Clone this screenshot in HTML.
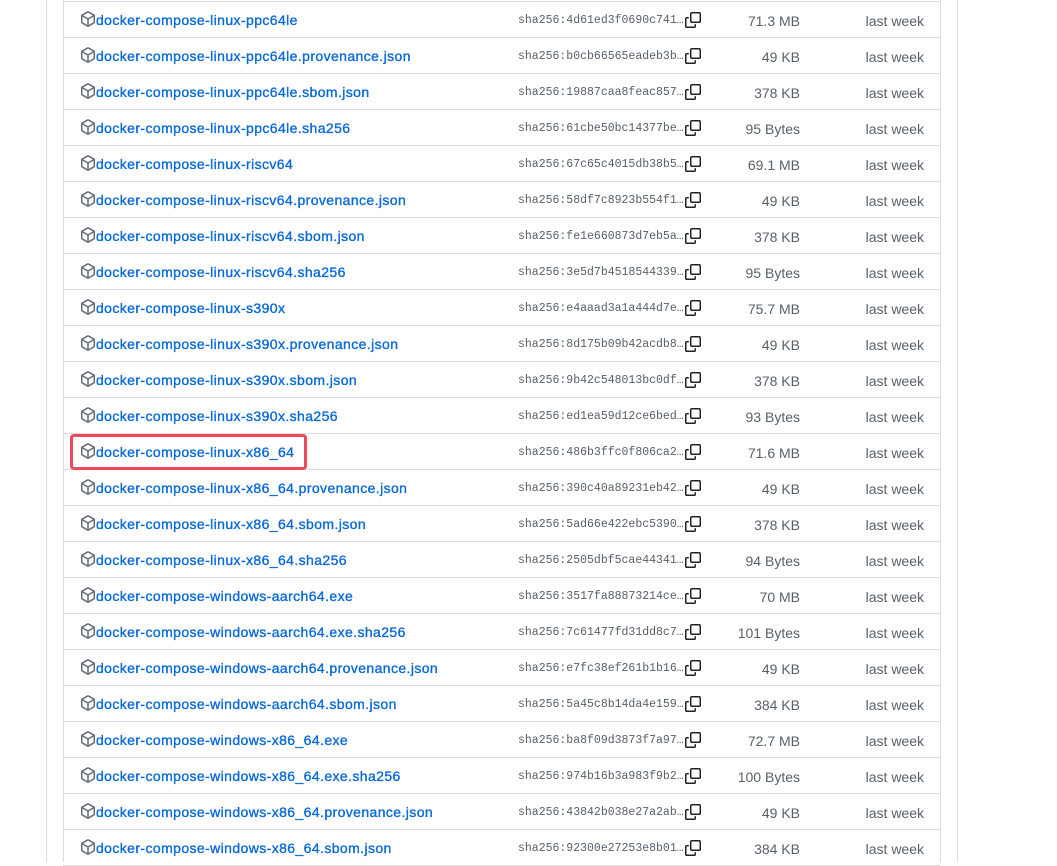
<!DOCTYPE html><html><head><meta charset="utf-8"><style>
body{margin:0;width:1057px;height:862px;overflow:hidden;background:#fff;font-family:"Liberation Sans",sans-serif;position:relative}
.vl{position:absolute;top:0;bottom:0;width:1px;background:#d8dee4}
.row{position:absolute;left:63px;width:877px;height:36px;border-bottom:1px solid #d8dee4}
.ic{position:absolute;left:17px;top:10px}
.nm{position:absolute;left:33px;top:11px;font-size:14px;letter-spacing:0.4px;color:#0969da;font-weight:normal;-webkit-text-stroke:0.35px #0969da;white-space:nowrap}
.h{position:absolute;left:455px;top:13px;font-family:"Liberation Mono",monospace;font-size:11.5px;color:#57606a;white-space:nowrap}
.cp{position:absolute;left:622px;top:11px}
.sz{position:absolute;right:140px;top:12px;font-size:14px;color:#57606a}
.dt{position:absolute;right:16px;top:12px;font-size:14px;color:#57606a}
.hl{position:absolute;left:70px;top:434px;width:231px;height:30px;border:3px solid #f0475a;border-radius:4px}
</style></head><body>
<div class="vl" style="left:46px"></div><div class="vl" style="left:957px"></div>
<div class="vl" style="left:63px"></div><div class="vl" style="left:940px"></div>
<div class="row" style="top:0;height:1px"></div>
<div id="rows"></div>
<div class="hl"></div>
<script>
var d=[
["docker-compose-linux-ppc64le","4d61ed3f0690c741","71.3 MB"],
["docker-compose-linux-ppc64le.provenance.json","b0cb66565eadeb3b","49 KB"],
["docker-compose-linux-ppc64le.sbom.json","19887caa8feac857","378 KB"],
["docker-compose-linux-ppc64le.sha256","61cbe50bc14377be","95 Bytes"],
["docker-compose-linux-riscv64","67c65c4015db38b5","69.1 MB"],
["docker-compose-linux-riscv64.provenance.json","58df7c8923b554f1","49 KB"],
["docker-compose-linux-riscv64.sbom.json","fe1e660873d7eb5a","378 KB"],
["docker-compose-linux-riscv64.sha256","3e5d7b4518544339","95 Bytes"],
["docker-compose-linux-s390x","e4aaad3a1a444d7e","75.7 MB"],
["docker-compose-linux-s390x.provenance.json","8d175b09b42acdb8","49 KB"],
["docker-compose-linux-s390x.sbom.json","9b42c548013bc0df","378 KB"],
["docker-compose-linux-s390x.sha256","ed1ea59d12ce6bed","93 Bytes"],
["docker-compose-linux-x86_64","486b3ffc0f806ca2","71.6 MB"],
["docker-compose-linux-x86_64.provenance.json","390c40a89231eb42","49 KB"],
["docker-compose-linux-x86_64.sbom.json","5ad66e422ebc5390","378 KB"],
["docker-compose-linux-x86_64.sha256","2505dbf5cae44341","94 Bytes"],
["docker-compose-windows-aarch64.exe","3517fa88873214ce","70 MB"],
["docker-compose-windows-aarch64.exe.sha256","7c61477fd31dd8c7","101 Bytes"],
["docker-compose-windows-aarch64.provenance.json","e7fc38ef261b1b16","49 KB"],
["docker-compose-windows-aarch64.sbom.json","5a45c8b14da4e159","384 KB"],
["docker-compose-windows-x86_64.exe","ba8f09d3873f7a97","72.7 MB"],
["docker-compose-windows-x86_64.exe.sha256","974b16b3a983f9b2","100 Bytes"],
["docker-compose-windows-x86_64.provenance.json","43842b038e27a2ab","49 KB"],
["docker-compose-windows-x86_64.sbom.json","92300e27253e8b01","384 KB"]];
var ic='<svg class="ic" width="16" height="16" viewBox="0 0 16 16" fill="#656d76"><path d="m8.878.392 5.25 3.045c.54.314.872.89.872 1.514v6.098a1.75 1.75 0 0 1-.872 1.514l-5.25 3.045a1.75 1.750 0 0 1-1.756 0l-5.25-3.045A1.75 1.75 0 0 1 1 11.049V4.951c0-.624.332-1.201.872-1.514L7.122.392a1.75 1.75 0 0 1 1.756 0ZM7.875 1.69l-4.630 2.685L8 7.133l4.755-2.758-4.63-2.685a.248.248 0 0 0-.25 0ZM2.5 5.677v5.372c0 .09.047.171.125.216l4.625 2.683V8.432Zm6.25 8.271 4.625-2.683a.25.25 0 0 0 .125-.216V5.677L8.75 8.432Z"/></svg>';
var cp='<svg class="cp" width="16" height="16" viewBox="0 0 16 16" fill="#1f2328"><path d="M0 6.75C0 5.784.784 5 1.75 5h1.5a.75.75 0 0 1 0 1.5h-1.5a.25.25 0 0 0-.25.25v7.5c0 .138.112.25.25.25h7.5a.25.25 0 0 0 .25-.25v-1.5a.75.75 0 0 1 1.5 0v1.5A1.75 1.75 0 0 1 9.25 16h-7.5A1.75 1.75 0 0 1 0 14.25Z"/><path d="M5 1.75C5 .784 5.784 0 6.75 0h7.5C15.216 0 16 .784 16 1.750v7.5A1.75 1.75 0 0 1 14.25 11h-7.5A1.75 1.75 0 0 1 5 9.25Zm1.75-.25a.25.25 0 0 0-.25.25v7.5c0 .138.112.25.25.25h7.5a.25.25 0 0 0 .25-.25v-7.5a.25.25 0 0 0-.25-.25Z"/></svg>';
var h='';d.forEach(function(r,i){h+='<div class="row" style="top:'+(1+i*36)+'px">'+ic+'<span class="nm">'+r[0]+'</span><span class="h">sha256:'+r[1]+'…</span>'+cp+'<span class="sz">'+r[2]+'</span><span class="dt">last week</span></div>';});
document.getElementById('rows').innerHTML=h;
</script>
</body></html>
